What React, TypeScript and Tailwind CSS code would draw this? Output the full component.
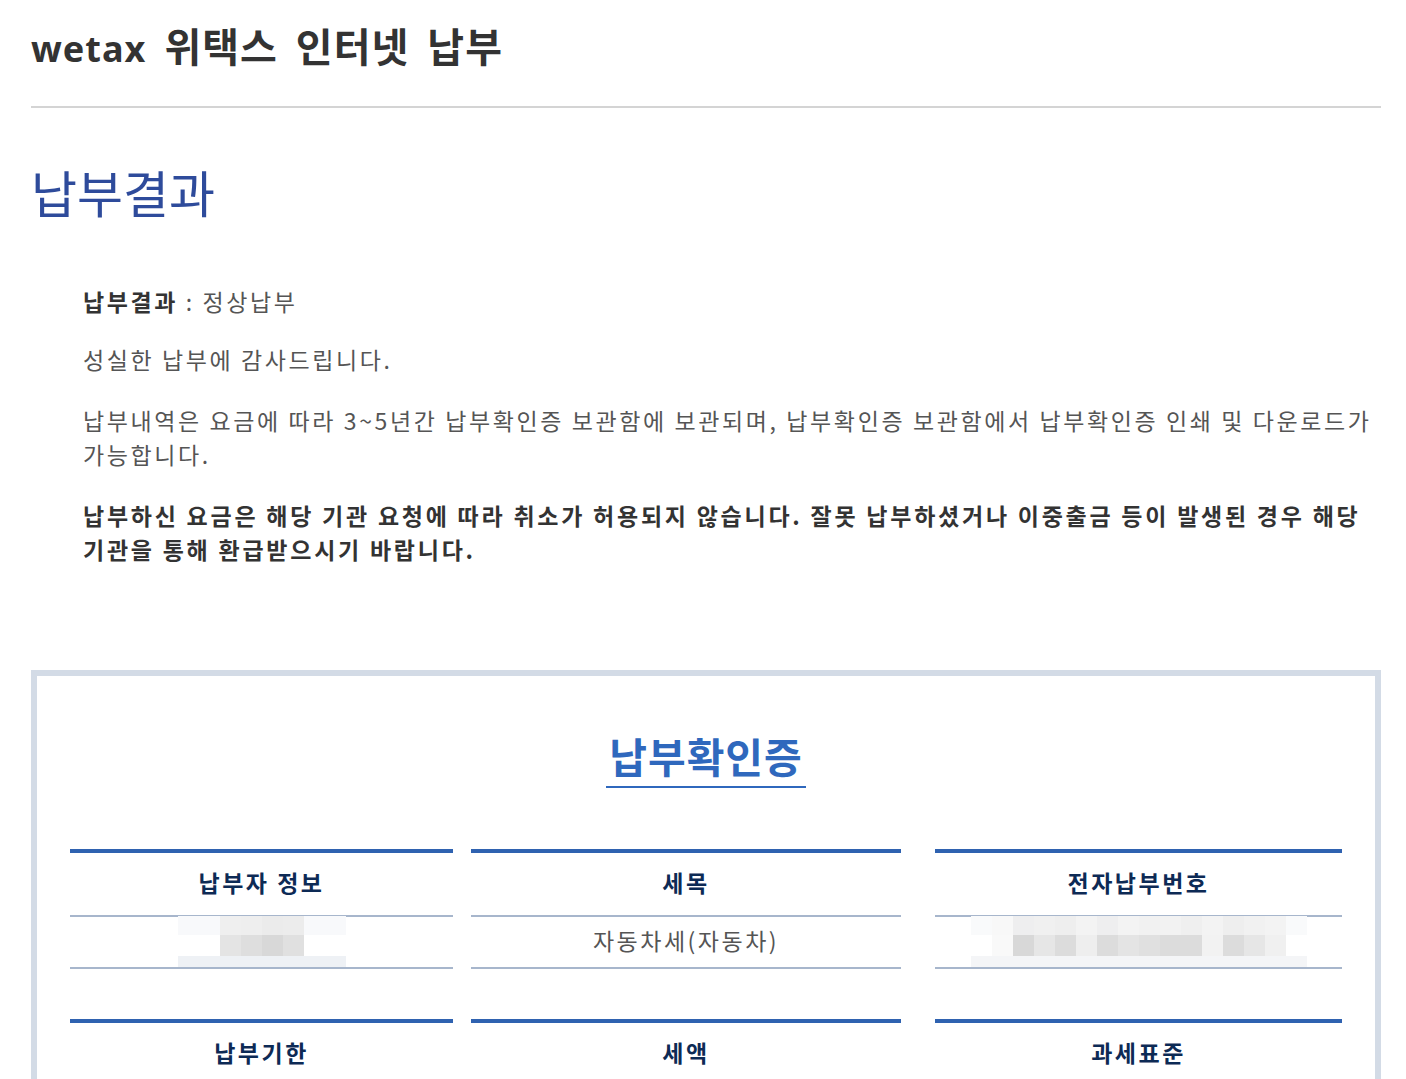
const FONT = "font-['Noto_Sans_CJK_KR','Noto_Sans',sans-serif]";

const NAME_TOP = ["bg-[#f8f9fb]", "bg-[#f8f9fb]", "bg-[#efefef]", "bg-[#eeeeee]", "bg-[#ebebeb]", "bg-[#ececec]", "bg-[#f8f9fb]", "bg-[#f8f9fb]"];
const NAME_MID = ["bg-white", "bg-white", "bg-[#e4e4e4]", "bg-[#dedede]", "bg-[#d8d8d8]", "bg-[#e0e0e0]", "bg-white", "bg-white"];

const NUM_TOP = [
  "bg-[#f9fafb]", "bg-[#f8f8f8]", "bg-[#eeeeef]", "bg-[#f0f0f0]", "bg-[#eeeeee]", "bg-[#f3f3f3]", "bg-[#eeeeef]", "bg-[#f3f3f3]",
  "bg-[#f1f1f1]", "bg-[#f2f2f2]", "bg-[#efefef]", "bg-[#f3f3f3]", "bg-[#eeeeee]", "bg-[#f1f1f1]", "bg-[#f3f3f3]", "bg-[#f9fafb]",
];
const NUM_MID = [
  "bg-white", "bg-[#f9f9f9]", "bg-[#d8d8d8]", "bg-[#e6e6e6]", "bg-[#dcdcdc]", "bg-[#eeeeee]", "bg-[#dcdcdc]", "bg-[#e4e4e4]",
  "bg-[#e0e0e0]", "bg-[#dcdcdc]", "bg-[#dcdcdc]", "bg-[#f2f2f2]", "bg-[#dcdcdc]", "bg-[#e6e6e6]", "bg-[#f0f0f0]", "bg-white",
];

const Mosaic = ({ top, mid, band }: { top: string[]; mid: string[]; band: string }) => (
  <div className="flex flex-col -mb-[3px]">
    <div className="flex">
      {top.map((c, i) => (
        <div key={i} className={`w-[21px] h-[19px] ${c}`} />
      ))}
    </div>
    <div className="flex">
      {mid.map((c, i) => (
        <div key={i} className={`w-[21px] h-[21px] ${c}`} />
      ))}
    </div>
    <div className={`h-[13px] ${band}`} />
  </div>
);

const Cell = ({ width, title, children }: { width: string; title: string; children?: React.ReactNode }) => (
  <div className={`${width} flex flex-col`}>
    <div className="h-[4px] bg-[#2f62b0]" />
    <div className="h-[62px] pb-[4px] flex items-center justify-center text-[23px] font-bold tracking-[2.5px] text-[#0d2a55]">
      {title}
    </div>
    <div className="h-[2px] bg-[#a7b6cc]" />
    <div className="h-[50px] pb-[3px] flex items-center justify-center text-[23px] tracking-[2.5px] text-[#555]">
      {children}
    </div>
    <div className="h-[2px] bg-[#a7b6cc]" />
  </div>
);

export default function App() {
  return (
    <div className={`min-h-screen bg-white ${FONT}`}>
      <div className="ml-[31px] w-[1350px]">
        <header className="pt-[25px] pb-[37px] border-b-2 border-[#d4d4d4]">
          <h1 className="text-[40px] leading-[40px] font-bold tracking-[1px] text-[#333] [word-spacing:8px]">
            <span className="text-[36px] font-['Noto_Sans',sans-serif]">wetax</span> 위택스 인터넷 납부
          </h1>
        </header>

        <h2 className="mt-[58px] text-[50px] leading-[50px] text-[#2e4b9b]">납부결과</h2>

        <div className="mt-[68px] pl-[52px] text-[23px] leading-[34px] tracking-[2.6px] text-[#555]">
          <p>
            <strong className="font-bold text-[#333]">납부결과</strong> : 정상납부
          </p>
          <p className="mt-[24px]">성실한 납부에 감사드립니다.</p>
          <p className="mt-[27px]">
            납부내역은 요금에 따라 3~5년간 납부확인증 보관함에 보관되며, 납부확인증 보관함에서 납부확인증 인쇄 및 다운로드가 가능합니다.
          </p>
          <p className="mt-[27px] font-bold tracking-[2.75px] text-[#333]">
            납부하신 요금은 해당 기관 요청에 따라 취소가 허용되지 않습니다. 잘못 납부하셨거나 이중출금 등이 발생된 경우 해당 기관을 통해 환급받으시기 바랍니다.
          </p>
        </div>

        <section className="mt-[104px] border-[6px] border-b-0 border-[#d3dbe6] px-[33px] pb-[40px]">
          <div className="pt-[56px] flex justify-center">
            <h3 className="px-[3px] pb-[8px] border-b-2 border-[#2f68bd] text-[41px] leading-[46px] font-bold tracking-[1px] text-[#2f68bd]">
              납부확인증
            </h3>
          </div>

          <div className="mt-[61px] flex">
            <Cell width="w-[383px]" title="납부자 정보">
              <Mosaic top={NAME_TOP} mid={NAME_MID} band="bg-[#eef1f5]" />
            </Cell>
            <div className="w-[18px]" />
            <Cell width="w-[430px]" title="세목">
              자동차세(자동차)
            </Cell>
            <div className="w-[34px]" />
            <Cell width="w-[407px]" title="전자납부번호">
              <Mosaic top={NUM_TOP} mid={NUM_MID} band="bg-[#f4f5f7]" />
            </Cell>
          </div>

          <div className="mt-[50px] flex">
            <Cell width="w-[383px]" title="납부기한" />
            <div className="w-[18px]" />
            <Cell width="w-[430px]" title="세액" />
            <div className="w-[34px]" />
            <Cell width="w-[407px]" title="과세표준" />
          </div>
        </section>
      </div>
    </div>
  );
}
